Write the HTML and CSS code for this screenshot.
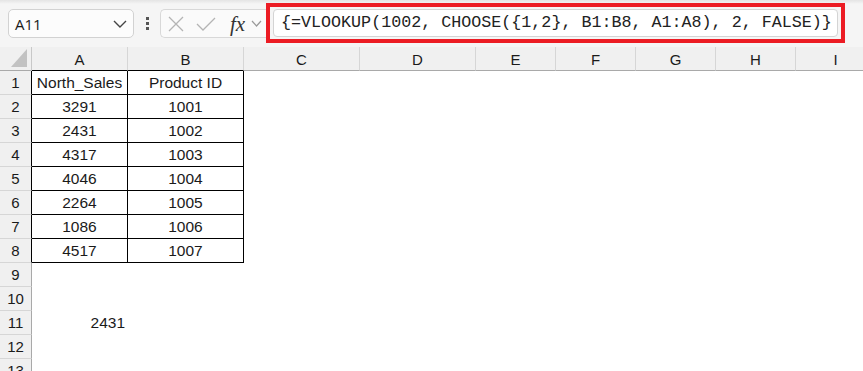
FILE: index.html
```html
<!DOCTYPE html>
<html lang="en">

<head>
    <meta charset="UTF-8">
    <title>VLOOKUP with CHOOSE</title>
    <link rel="stylesheet" href="styles.css">
</head>

<body>

    <!-- Formula bar -->
    <div class="toolbar">
        <div class="namebox">
            <span>A11</span>
            <svg width="14" height="8" viewBox="0 0 14 8"><polyline points="1,1 7,7 13,1" fill="none" stroke="#444" stroke-width="1.4"/></svg>
        </div>
        <div class="dots"><span></span><span></span><span></span></div>
        <div class="fxbox">
            <svg class="cancel" width="16" height="16" viewBox="0 0 16 16"><path d="M1 1 L15 15 M15 1 L1 15" stroke="#b4b4b4" stroke-width="1.3" fill="none"/></svg>
            <svg class="enter" width="20" height="16" viewBox="0 0 20 16"><polyline points="1,8 7,14 19,2" stroke="#b4b4b4" stroke-width="1.3" fill="none"/></svg>
            <span class="fx">fx</span>
            <svg width="11" height="7" viewBox="0 0 11 7"><polyline points="1,1 5.5,6 10,1" fill="none" stroke="#999" stroke-width="1.2"/></svg>
        </div>
        <div class="highlight">
            <div class="formula">{=VLOOKUP(1002, CHOOSE({1,2}, B1:B8, A1:A8), 2, FALSE)}</div>
        </div>
    </div>

    <!-- Sheet -->
    <div class="sheet">
        <div class="h corner"><svg width="16" height="18" viewBox="0 0 16 18"><polygon points="16,0 16,18 0,18" fill="#c2c2c2"/></svg></div>
        <div class="h edge">A</div><div class="h edge">B</div><div class="h">C</div><div class="h">D</div>
        <div class="h">E</div><div class="h">F</div><div class="h">G</div><div class="h">H</div><div class="h">I</div>

        <div class="r edge">1</div><div class="t">North_Sales</div><div class="t">Product ID</div><div></div><div></div><div></div><div></div><div></div><div></div><div></div>
        <div class="r edge">2</div><div class="t">3291</div><div class="t">1001</div><div></div><div></div><div></div><div></div><div></div><div></div><div></div>
        <div class="r edge">3</div><div class="t">2431</div><div class="t">1002</div><div></div><div></div><div></div><div></div><div></div><div></div><div></div>
        <div class="r edge">4</div><div class="t">4317</div><div class="t">1003</div><div></div><div></div><div></div><div></div><div></div><div></div><div></div>
        <div class="r edge">5</div><div class="t">4046</div><div class="t">1004</div><div></div><div></div><div></div><div></div><div></div><div></div><div></div>
        <div class="r edge">6</div><div class="t">2264</div><div class="t">1005</div><div></div><div></div><div></div><div></div><div></div><div></div><div></div>
        <div class="r edge">7</div><div class="t">1086</div><div class="t">1006</div><div></div><div></div><div></div><div></div><div></div><div></div><div></div>
        <div class="r edge">8</div><div class="t">4517</div><div class="t">1007</div><div></div><div></div><div></div><div></div><div></div><div></div><div></div>
        <div class="r">9</div><div></div><div></div><div></div><div></div><div></div><div></div><div></div><div></div><div></div>
        <div class="r">10</div><div></div><div></div><div></div><div></div><div></div><div></div><div></div><div></div><div></div>
        <div class="r">11</div><div class="num">2431</div><div></div><div></div><div></div><div></div><div></div><div></div><div></div><div></div>
        <div class="r">12</div><div></div><div></div><div></div><div></div><div></div><div></div><div></div><div></div><div></div>
        <div class="r">13</div><div></div><div></div><div></div><div></div><div></div><div></div><div></div><div></div><div></div>
    </div>

</body>

</html>
```

FILE: styles.css
```css
body {
    margin: 0;
    padding: 0;
    width: 863px;
    height: 371px;
    overflow: hidden;
    background-color: #fff;
    font-family: "Liberation Sans", Arial, sans-serif;
    color: #1a1a1a;
}

.toolbar {
    display: flex;
    align-items: center;
    height: 47px;
    padding-left: 8px;
    box-sizing: border-box;
    background: linear-gradient(#e4e4e4, #f5f5f5 4px);
}

.namebox {
    display: flex;
    align-items: center;
    justify-content: space-between;
    width: 126px;
    height: 29px;
    box-sizing: border-box;
    padding: 0 6px 0 6px;
    border: 1px solid #d2d2d2;
    border-radius: 5px;
    background: #fcfcfc;
    font-family: "Open Sans", sans-serif;
    font-size: 15px;
}

.dots {
    display: flex;
    flex-direction: column;
    align-items: center;
    gap: 2px;
    width: 26px;
}

.dots span {
    width: 3px;
    height: 3px;
    background: #555;
}

.fxbox {
    display: flex;
    align-items: center;
    width: 106px;
    height: 29px;
    box-sizing: border-box;
    padding-left: 7px;
    border: 1px solid #d8d8d8;
    border-right: none;
    border-radius: 5px 0 0 5px;
    background: #fafafa;
}

.fxbox .enter {
    margin-left: 12px;
}

.fx {
    margin: 0 6px 0 14px;
    font-family: "Liberation Serif", serif;
    font-style: italic;
    font-size: 21px;
    line-height: 20px;
    color: #333;
}

.highlight {
    align-self: flex-start;
    margin-top: 3px;
    width: 579px;
    height: 40px;
    box-sizing: border-box;
    padding: 2px 3px 2px 3px;
    border: 4px solid #ec1c24;
    background: #f5f5f5;
}

.formula {
    height: 28px;
    box-sizing: border-box;
    padding-left: 7px;
    border: 1px solid #d4d4d4;
    border-radius: 4px;
    background: #fff;
    font-family: "Liberation Mono", monospace;
    font-size: 16.7px;
    line-height: 26px;
    color: #222;
    white-space: nowrap;
}

.sheet {
    display: grid;
    grid-template-columns: 32px 96px 116px 116px 116px repeat(5, 80px);
    grid-template-rows: 24px;
    grid-auto-rows: 24px;
    font-size: 15.5px;
}

.sheet div {
    box-sizing: border-box;
    line-height: 23px;
    text-align: center;
    white-space: nowrap;
}

.h {
    background: #f0f0f0;
    border-right: 1px solid #d6d6d6;
    border-bottom: 1px solid #a9a9a9;
    font-size: 15px;
    line-height: 25px !important;
}

.h.edge {
    border-bottom-color: #000;
}

.corner {
    position: relative;
    border-right-color: #c8c8c8;
}

.corner svg {
    position: absolute;
    right: 4px;
    bottom: 3px;
}

.r {
    background: #f0f0f0;
    border-right: 1px solid #a9a9a9;
    border-bottom: 1px solid #d6d6d6;
    font-size: 15px;
}

.r.edge {
    border-right-color: #000;
}

.t {
    border-right: 1px solid #000;
    border-bottom: 1px solid #000;
}

.sheet .num {
    text-align: right;
    padding-right: 3px;
}
```
